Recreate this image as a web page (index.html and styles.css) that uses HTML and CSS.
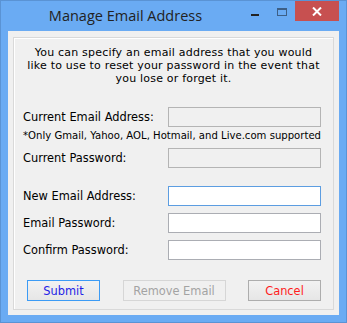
FILE: index.html
```html
<!DOCTYPE html>
<html lang="en">
<head>
  <meta charset="UTF-8" />
  <title>Manage Email Address</title>
  <link rel="stylesheet" href="styles.css">
</head>
<body>

  <div class="win">
    <!-- title bar -->
    <div class="win--titlebar">
      <div class="win--title">Manage Email Address</div>
      <div class="win--caption">
        <span class="cap-btn cap-min"><i></i></span>
        <span class="cap-btn cap-max"><i></i></span>
        <span class="cap-btn cap-close">
          <svg width="10" height="9" viewBox="0 0 10 9">
            <path d="M1 0.5 L9 8.5 M9 0.5 L1 8.5" stroke="#fff" stroke-width="2" fill="none" />
          </svg>
        </span>
      </div>
    </div>

    <!-- client area -->
    <div class="win--client">
      <div class="group">
        <p class="intro">You can specify an email address that you would<br>like to use to reset your password in the event that<br>you lose or forget it.</p>

        <div class="form-row">
          <label>Current Email Address:</label>
          <input type="text" class="txt" disabled>
        </div>
        <p class="note">*Only Gmail, Yahoo, AOL, Hotmail, and Live.com supported</p>
        <div class="form-row">
          <label>Current Password:</label>
          <input type="password" class="txt" disabled>
        </div>

        <div class="form-row form-row--first">
          <label>New Email Address:</label>
          <input type="text" class="txt is-focus">
        </div>
        <div class="form-row">
          <label>Email Password:</label>
          <input type="password" class="txt">
        </div>
        <div class="form-row">
          <label>Confirm Password:</label>
          <input type="password" class="txt">
        </div>

        <div class="actions">
          <button class="btn btn--submit">Submit</button>
          <button class="btn btn--remove" disabled>Remove Email</button>
          <button class="btn btn--cancel">Cancel</button>
        </div>
      </div>
    </div>
  </div>

</body>
</html>
```

FILE: styles.css
```css
* { box-sizing: border-box; margin: 0; padding: 0; }

html, body {
  width: 347px;
  height: 323px;
  overflow: hidden;
}

body {
  font-family: 'DejaVu Sans', sans-serif;
  font-size: 11.4px;
  color: #000;
}

.win {
  width: 347px;
  height: 323px;
  background-color: #6aabf3;
  border: 1px solid #5a93d4;
  display: flex;
  flex-direction: column;
}

.win--titlebar {
  height: 30px;
  display: flex;
  padding-right: 7px;
}

.win--title {
  flex: 1;
  text-align: center;
  font-family: 'Open Sans', sans-serif;
  font-size: 14.5px;
  color: #222;
  padding-top: 5px;
  padding-left: 8px;
}

.win--caption {
  display: flex;
  align-items: flex-start;
}

.cap-btn {
  height: 20px;
  display: flex;
  align-items: center;
  justify-content: center;
}

.cap-min { width: 26px; }
.cap-max { width: 27px; }
.cap-close {
  width: 44px;
  background-color: #c75050;
}

.cap-min i {
  display: block;
  width: 8px;
  height: 2px;
  background-color: #222;
  margin-top: 8px;
}

.cap-max i {
  display: block;
  width: 10px;
  height: 8px;
  border: 1px solid #3d5f86;
  border-top-width: 2px;
  margin-top: 2px;
}

.win--client {
  flex: 1;
  margin: 0 7px 7px;
  background-color: #f0f0f0;
  display: flex;
  padding: 6px 5px 5px;
}

.group {
  flex: 1;
  border: 1px solid #d9d9d9;
  box-shadow: inset 1px 1px 0 #fff;
  padding: 8px 12px 0 9px;
}

.intro {
  text-align: center;
  font-size: 11px;
  letter-spacing: 0.2px;
  line-height: 13px;
  white-space: nowrap;
  margin-left: 3px;
}

.form-row {
  display: flex;
  align-items: center;
  justify-content: space-between;
  height: 20px;
  margin-top: 7px;
}

.intro + .form-row { margin-top: 22px; }
.form-row--first { margin-top: 18px; }

.note {
  margin-top: 3px;
  font-size: 10.1px;
  white-space: nowrap;
  line-height: 12px;
}

.note + .form-row { margin-top: 6px; }

.txt {
  width: 153px;
  height: 20px;
  border: 1px solid #abadb3;
  background-color: #fff;
  font: inherit;
}

.txt:disabled {
  background-color: #f0f0f0;
  border-color: #b4b4b4;
}

.txt.is-focus {
  border-color: #5c9de1;
}

.actions {
  display: flex;
  justify-content: space-between;
  margin-top: 20px;
  margin-left: 4px;
}

.btn {
  height: 21px;
  width: 73px;
  font: inherit;
  font-size: 11.4px;
  border: 1px solid #adadad;
  background: linear-gradient(#f2f2f2, #e6e6e6);
  color: #000;
}

.btn--submit {
  border-color: #3c9bf5;
  color: #1f1fe6;
}

.btn--remove {
  width: 103px;
  border-color: #d6d6d6;
  background: #f0f0f0;
  color: #a3a3a3;
}

.btn--cancel {
  color: #ff1c1c;
}
```
